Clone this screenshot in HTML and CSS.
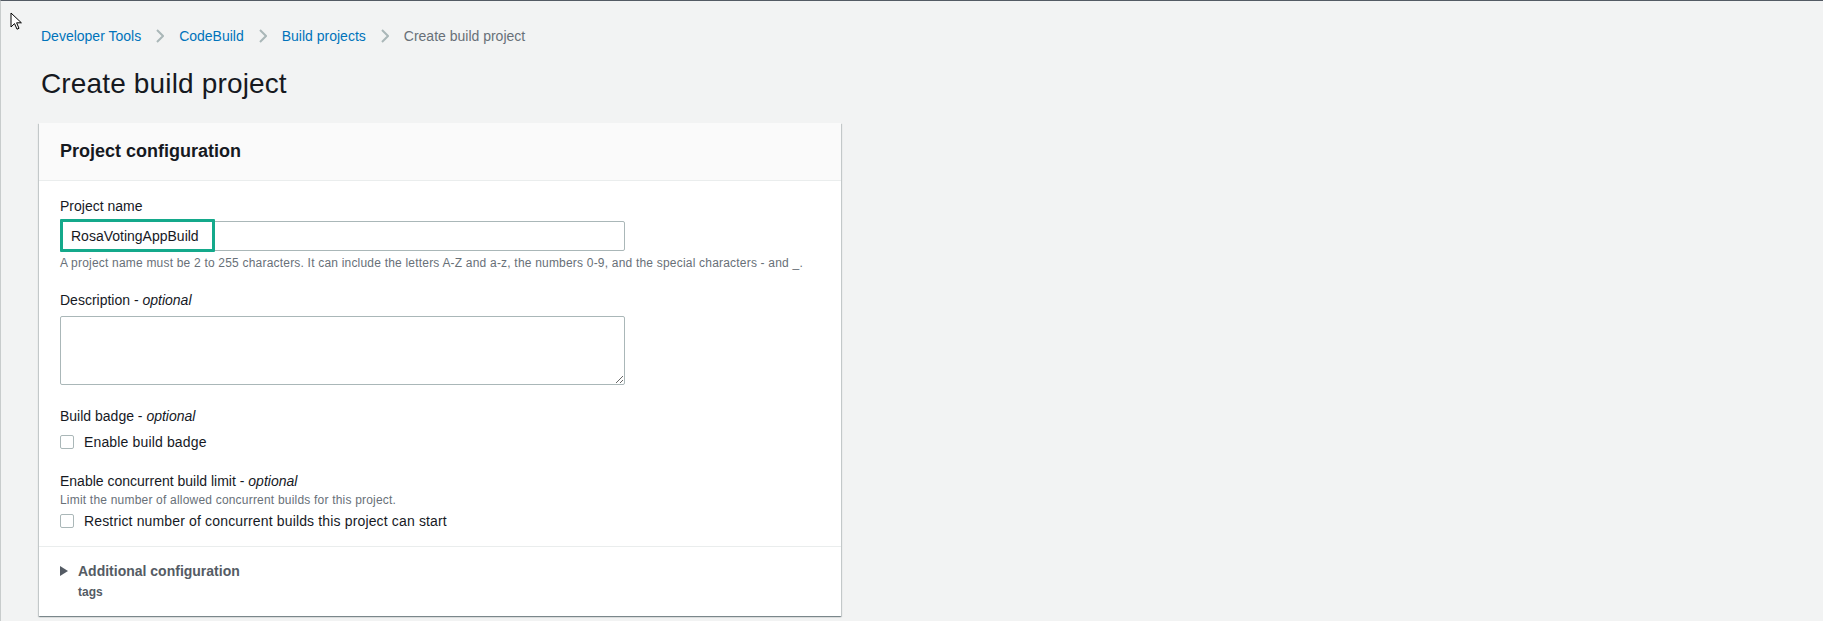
FILE: index.html
```html
<!DOCTYPE html>
<html lang="en">
<head>
    <meta charset="UTF-8">
    <title>Create build project</title>
    <link rel="stylesheet" href="styles.css">
</head>
<body>

    <div class="frame">
        <svg class="pointer" width="13" height="19" viewBox="0 0 13 19">
            <path d="M1 1 L1 15 L4.5 11.6 L7 17.2 L9 16.3 L6.6 10.8 L11.4 10.8 Z" fill="#fff" stroke="#000" stroke-width="1" stroke-linejoin="round"/>
        </svg>

        <nav class="breadcrumbs">
            <a href="#">Developer Tools</a>
            <svg class="chev" width="8" height="14" viewBox="0 0 8 14"><path d="M1 1 L7 7 L1 13" fill="none" stroke="#aab7b8" stroke-width="2"/></svg>
            <a href="#">CodeBuild</a>
            <svg class="chev" width="8" height="14" viewBox="0 0 8 14"><path d="M1 1 L7 7 L1 13" fill="none" stroke="#aab7b8" stroke-width="2"/></svg>
            <a href="#">Build projects</a>
            <svg class="chev" width="8" height="14" viewBox="0 0 8 14"><path d="M1 1 L7 7 L1 13" fill="none" stroke="#aab7b8" stroke-width="2"/></svg>
            <span class="current">Create build project</span>
        </nav>

        <h1>Create build project</h1>

        <div class="panel">
            <div class="panel-header">
                <h2>Project configuration</h2>
            </div>
            <div class="panel-body">
                <label class="field-label">Project name</label>
                <div class="input-wrap">
                    <input type="text" class="text-input" value="RosaVotingAppBuild">
                    <span class="highlight"></span>
                </div>
                <p class="hint">A project name must be 2 to 255 characters. It can include the letters A-Z and a-z, the numbers 0-9, and the special characters - and _.</p>

                <label class="field-label gap-desc">Description - <i>optional</i></label>
                <textarea class="text-area"></textarea>

                <label class="field-label gap-badge">Build badge - <i>optional</i></label>
                <div class="check-row first">
                    <span class="box"></span>
                    <span>Enable build badge</span>
                </div>

                <label class="field-label gap-limit">Enable concurrent build limit - <i>optional</i></label>
                <p class="hint tight">Limit the number of allowed concurrent builds for this project.</p>
                <div class="check-row second">
                    <span class="box"></span>
                    <span>Restrict number of concurrent builds this project can start</span>
                </div>
            </div>
            <div class="panel-footer">
                <div class="expander">
                    <svg class="caret" width="8" height="10" viewBox="0 0 8 10"><path d="M0 0 L8 5 L0 10 Z" fill="#545b64"/></svg>
                    <span>Additional configuration</span>
                </div>
                <div class="expander-sub">tags</div>
            </div>
        </div>
    </div>

</body>
</html>
```

FILE: styles.css
```css
body {
    margin: 0;
    font-family: "Liberation Sans", Arial, sans-serif;
    font-size: 14px;
    color: #16191f;
    background-color: #f2f3f3;
}
.frame {
    position: relative;
    height: 620px;
    border-top: 1px solid #545b64;
    border-left: 1px solid #c8cccc;
    overflow: hidden;
}
.pointer {
    position: absolute;
    left: 9px;
    top: 11px;
}
.breadcrumbs {
    display: flex;
    align-items: center;
    gap: 15px;
    padding: 25px 0 0 40px;
    line-height: 20px;
}
.breadcrumbs a {
    color: #0073bb;
    text-decoration: none;
}
.breadcrumbs .current {
    color: #687078;
}
.chev {
    display: block;
}
h1 {
    margin: 22px 0 0 40px;
    font-size: 28px;
    font-weight: 400;
    line-height: 32px;
    letter-spacing: 0.15px;
    color: #16191f;
}
.panel {
    width: 802px;
    margin: 23px 0 0 38px;
    background: #fff;
    box-shadow: 0 1px 1px 0 rgba(0, 28, 36, 0.3), 1px 1px 1px 0 rgba(0, 28, 36, 0.15), -1px 1px 1px 0 rgba(0, 28, 36, 0.15);
}
.panel-header {
    height: 57px;
    display: flex;
    align-items: center;
    padding: 0 21px;
    background: #fafafa;
    border-bottom: 1px solid #eaeded;
}
.panel-header h2 {
    margin: 0;
    font-size: 18px;
    font-weight: 700;
}
.panel-body {
    padding: 14px 21px 14px;
    border-bottom: 1px solid #eaeded;
}
.field-label {
    display: block;
    line-height: 22px;
}
.field-label i {
    font-style: italic;
}
.input-wrap {
    position: relative;
    margin-top: 4px;
    width: 565px;
}
.text-input {
    display: block;
    box-sizing: border-box;
    width: 565px;
    height: 30px;
    padding: 0 10px;
    border: 1px solid #aab7b8;
    border-radius: 2px;
    font-family: inherit;
    font-size: 14px;
    color: #16191f;
}
.highlight {
    position: absolute;
    left: 0;
    top: -2px;
    width: 155px;
    height: 33px;
    box-sizing: border-box;
    border: 3px solid #14a98b;
    border-radius: 1px;
}
.hint {
    margin: 4px 0 0;
    font-size: 12px;
    line-height: 16px;
    letter-spacing: 0.2px;
    color: #687078;
}
.hint.tight {
    margin-top: 0;
}
.gap-desc {
    margin-top: 18px;
}
.text-area {
    display: block;
    box-sizing: border-box;
    width: 565px;
    height: 69px;
    margin-top: 5px;
    border: 1px solid #aab7b8;
    border-radius: 2px;
    font-family: inherit;
}
.gap-badge {
    margin-top: 20px;
}
.gap-limit {
    margin-top: 17px;
}
.check-row {
    display: flex;
    align-items: center;
    gap: 10px;
    line-height: 22px;
    letter-spacing: 0.15px;
}
.check-row.first {
    margin-top: 4px;
}
.check-row.second {
    margin-top: 2px;
}
.box {
    width: 14px;
    height: 14px;
    box-sizing: border-box;
    border: 1px solid #aab7b8;
    border-radius: 2px;
    background: #fff;
}
.panel-footer {
    padding: 13px 21px 16px;
}
.expander {
    display: flex;
    align-items: center;
    gap: 10px;
    font-weight: 700;
    color: #545b64;
    line-height: 22px;
}
.caret {
    display: block;
}
.expander-sub {
    margin: 2px 0 0 18px;
    font-size: 12px;
    font-weight: 700;
    color: #545b64;
    line-height: 16px;
}
```
